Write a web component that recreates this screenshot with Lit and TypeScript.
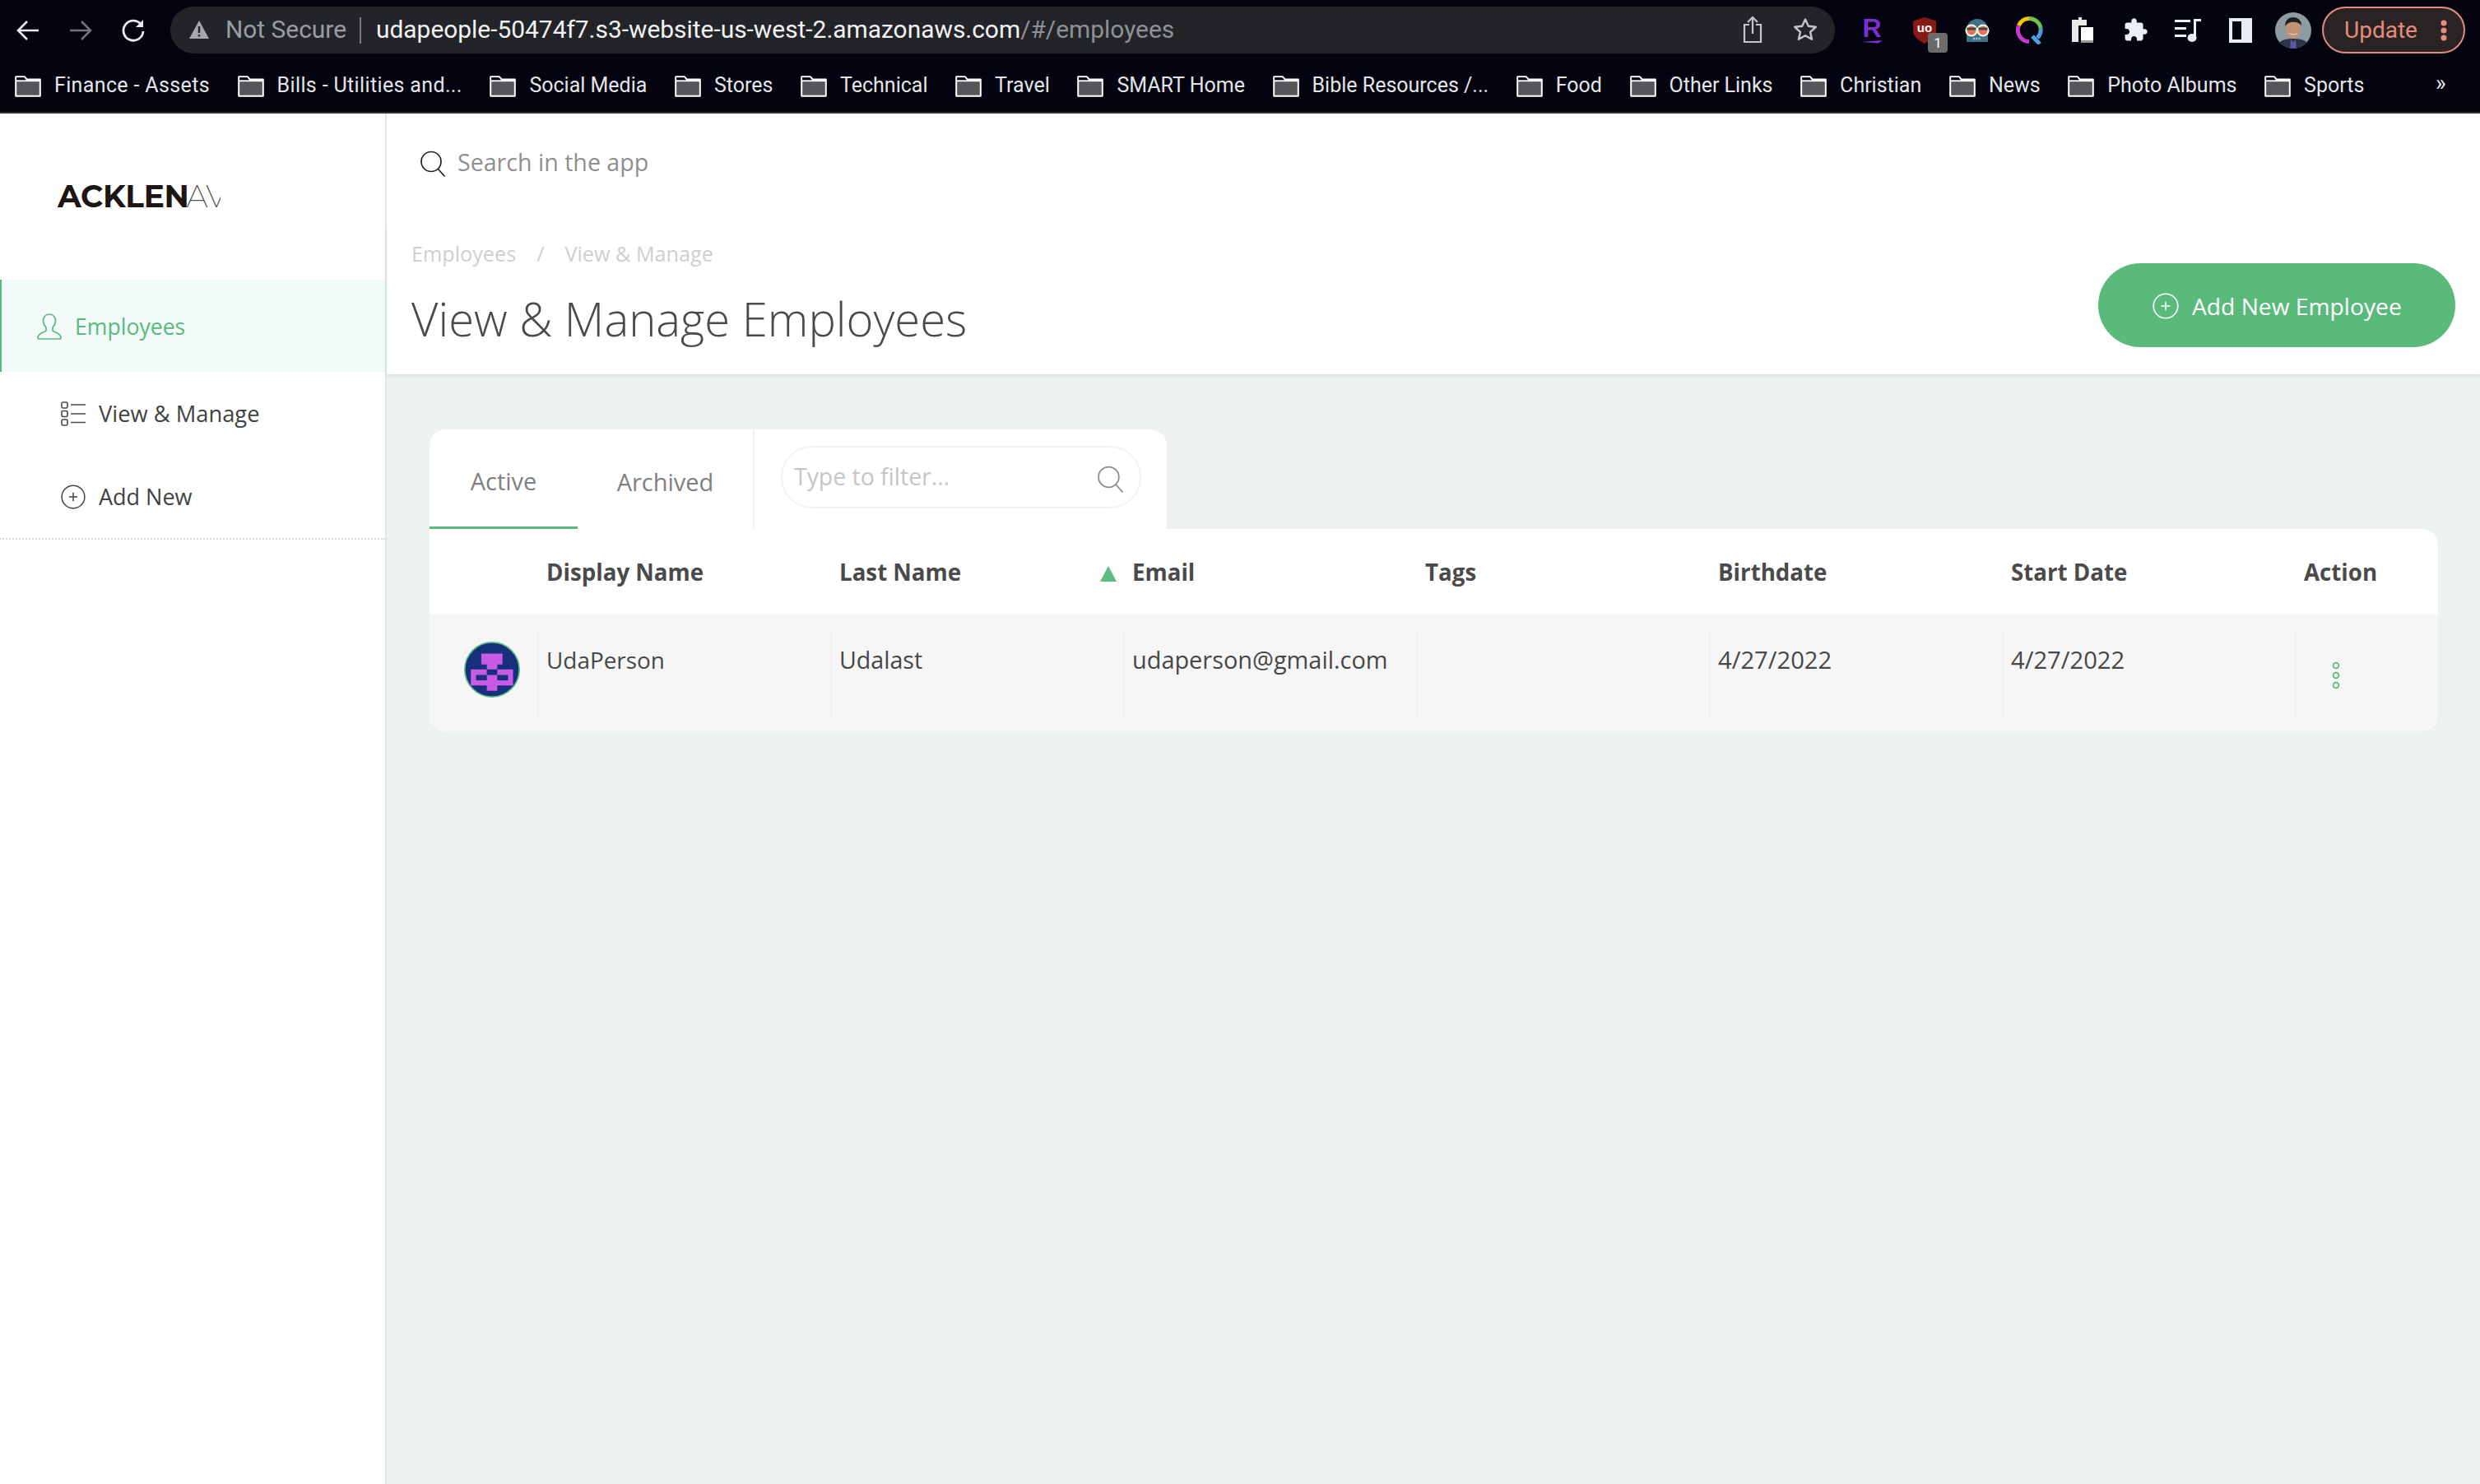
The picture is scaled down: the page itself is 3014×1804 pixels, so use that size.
import { LitElement, html, css } from "lit";
import { customElement } from "lit/decorators.js";

const bookmarks = ["Finance - Assets","Bills - Utilities and...","Social Media","Stores","Technical","Travel","SMART Home","Bible Resources /...","Food","Other Links","Christian","News","Photo Albums","Sports"];
const folder = html`<svg class="folder" width="32" height="26" viewBox="0 0 32 26"><path d="M1.2 24.8V1.2h10.6l3 3.4h16v20.2z" fill="#55565a" stroke="#fff" stroke-width="2" stroke-linejoin="round"/><path d="M1.2 6.2h30" stroke="#fff" stroke-width="2"/><path d="M2.2 2.2h9.2l2.2 3H2.2z" fill="#03040f"/></svg>`;
const plus = (c: string, s: number) => html`<svg width="${s}" height="${s}" viewBox="0 0 32 32" fill="none" stroke="${c}" stroke-width="1.6"><circle cx="16" cy="16" r="14.8"/><path d="M16 10.5v11M10.5 16h11"/></svg>`;
const lens = (c: string, s: number) => html`<svg width="${s}" height="${s}" viewBox="0 0 32 32" fill="none" stroke="${c}" stroke-width="1.7"><circle cx="14" cy="13.5" r="12"/><path d="M22.5 22.5l8 9"/></svg>`;

@customElement("app-root")
export class AppRoot extends LitElement {
  static styles = css`
    :host { display: block; width: 3014px; height: 1804px; overflow: hidden; font-family: "Open Sans", sans-serif; color: #444; background: #edf1f2; }
    .chrome { height: 136px; background: #03040f; border-bottom: 2px solid #2c2e33; font-family: Roboto, sans-serif; }
    .toolbar { height: 72px; display: flex; align-items: flex-start; padding: 8px 18px 0 2px; box-sizing: border-box; }
    .slot { width: 64px; height: 57px; display: flex; align-items: center; justify-content: center; flex: none; position: relative; }
    .omni { width: 2023px; height: 57px; margin: 0 13px 0 13px; border-radius: 29px; background: #232428; display: flex; align-items: center; padding: 0 20px 2px 23px; box-sizing: border-box; flex: none; font-size: 29.9px; white-space: nowrap; }
    .ns { color: #9a9da1; margin: 0 16px 0 20px; }
    .div { width: 2px; height: 32px; background: #77797d; margin: 2px 18px 0 0; }
    .url { color: #f1f2f4; }
    .url span { color: #8f9195; }
    .omni-r { margin-left: auto; display: flex; align-items: center; gap: 37px; margin-right: 1px; }
    .update { width: 174px; height: 57px; margin-left: 3px; box-sizing: border-box; border: 2px solid #e58a7e; border-radius: 29px; background: #2a2324; color: #e88b7f; display: flex; align-items: center; padding-left: 25px; font-size: 28px; flex: none; position: relative; }
    .udots { position: absolute; right: 20px; top: 14px; }
    .me { width: 44px; height: 44px; border-radius: 50%; overflow: hidden; }
    .badge { position: absolute; left: 36px; top: 32px; width: 24px; height: 24px; border-radius: 4px; background: #6b6b6b; color: #fff; font-size: 17px; line-height: 24px; text-align: center; }
    .bars { height: 64px; display: flex; align-items: flex-start; padding: 17px 0 0 18px; box-sizing: border-box; position: relative; gap: 33.6px; color: #e4e5e8; font-size: 25px; }
    .bm { display: flex; align-items: center; gap: 16px; height: 29px; white-space: nowrap; }
    .bm svg { margin-top: 2px; }
    .bm.wide { letter-spacing: 0.36px; }
    .more { position: absolute; left: 2960px; top: 13px; font-size: 27px; color: #e4e5e8; }

    .body { display: flex; height: 1666px; }
    .side { width: 470px; background: #fff; border-right: 2px solid #e3e6e8; box-sizing: border-box; flex: none; }
    .logo-wrap { height: 202px; padding: 82px 0 0 70px; box-sizing: border-box; }
    .logo { width: 198px; height: 40px; overflow: hidden; white-space: nowrap; font-family: Montserrat, Inter, sans-serif; font-size: 37.5px; line-height: 38px; color: #1e1613; font-weight: 700; letter-spacing: -0.3px; }
    .logo span { font-weight: 200; color: #554f4c; letter-spacing: -1px; margin-left: -3px; }
    .nav { display: flex; align-items: center; height: 101px; padding-left: 74px; gap: 16px; font-size: 27.3px; color: #424242; box-sizing: border-box; }
    .nav.on { height: 112px; background: #f3fbfa; border-left: 2px solid #5aba7b; padding: 2px 0 0 43px; color: #5aba7b; gap: 16px; font-size: 26.6px; }
    .nav.add-new { font-size: 27px; }
    .navs { border-bottom: 2px dotted #d6d8da; }

    .main { flex: 1; min-width: 0; }
    .search { height: 137px; background: #fff; display: flex; align-items: center; padding: 0 0 20px 40px; gap: 14px; box-sizing: border-box; color: #8f8f8f; font-size: 28.6px; }
    .search svg { margin-top: 4px; }
    .head { height: 180px; background: #fff; box-shadow: 0 2px 5px rgba(0,0,0,.09); display: flex; justify-content: space-between; padding: 0 30px; box-sizing: border-box; position: relative; }
    .crumbs { display: flex; gap: 25px; color: #cfcfcf; font-size: 25.2px; line-height: 34px; margin-top: 16px; }
    h1 { margin: 24px 0 0; font-weight: 300; font-size: 56.2px; line-height: 76px; color: #4a4a4a; }
    .add { width: 434px; height: 102px; margin-top: 45px; border-radius: 51px; background: #5aba7b; color: #fff; display: flex; align-items: center; padding: 2px 0 0 66px; gap: 16px; box-sizing: border-box; font-size: 28.2px; }

    .content { padding: 67px 0 0 52px; }
    .strip { width: 896px; height: 121px; background: #fff; border-radius: 20px 20px 0 0; display: flex; }
    .tab { display: flex; align-items: center; justify-content: center; font-size: 29px; color: #808080; padding-top: 6px; box-sizing: border-box; }
    .tab.a { width: 180px; border-bottom: 3px solid #5aba7b; }
    .tab.b { width: 215px; border-right: 2px solid #f3f3f3; }
    .filter { flex: 1; padding: 20px 0 0 32px; }
    .input { width: 438px; height: 76px; box-sizing: border-box; border: 2px solid #f2f2f2; border-radius: 38px; display: flex; align-items: center; justify-content: space-between; padding: 0 19px 2px 14px; color: #c6c6c6; font-size: 28.4px; }
    .input svg { margin-top: 6px; }

    .table { width: 2441px; display: grid; grid-template-columns: 131px repeat(6, 356px) 174px; background: #fff; border-radius: 0 20px 20px 20px; overflow: hidden; }
    .th { height: 104px; display: flex; align-items: center; justify-content: space-between; padding: 0 8px 0 11px; box-sizing: border-box; font-weight: 700; font-size: 27.7px; color: #4a4a4a; }
    .tri { width: 0; height: 0; margin-top: 4px; border-left: 10.5px solid transparent; border-right: 10.5px solid transparent; border-bottom: 19px solid #5fbb85; }
    .cell { height: 142px; background: #f6f6f6; position: relative; padding: 19px 0 0; box-sizing: border-box; }
    .inner { height: 108px; border-left: 2px solid #f0f0f0; padding: 18px 0 0 9px; box-sizing: border-box; line-height: 36px; color: #474747; }
    .f0 { font-size: 27.9px; }
    .f1 { font-size: 28.6px; }
    .f2 { font-size: 28.9px; }
    .f4, .f5 { font-size: 29.2px; }
    .cell.first { padding: 33px 0 0 42px; }
    .dots { display: block; margin: 20px 0 0 34px; }
  `;

  render() {
    const cols = ["UdaPerson", "Udalast", "udaperson@gmail.com", "", "4/27/2022", "4/27/2022"];
    return html`
      <div class="chrome">
        <div class="toolbar">
          <div class="slot"><svg width="30" height="30" viewBox="0 0 30 30" fill="none" stroke="#e8eaed" stroke-width="2.6"><path d="M28 15H4M14 4L3 15l11 11"/></svg></div>
          <div class="slot"><svg width="30" height="30" viewBox="0 0 30 30" fill="none" stroke="#74767a" stroke-width="2.6"><path d="M2 15h24M16 4l11 11-11 11"/></svg></div>
          <div class="slot"><svg width="30" height="30" viewBox="0 0 30 30" fill="none" stroke="#e8eaed" stroke-width="2.8"><path d="M25 8.5A12 12 0 1 0 27 16"/><path d="M27 2v9h-9z" fill="#e8eaed" stroke="none"/></svg></div>
          <div class="omni">
            <svg width="24" height="22" viewBox="0 0 24 22"><path d="M12 0L24 22H0z" fill="#a5a7aa"/><path d="M12 7v8M12 17v2.5" stroke="#232428" stroke-width="2.4"/></svg>
            <span class="ns">Not Secure</span><i class="div"></i>
            <span class="url">udapeople-50474f7.s3-website-us-west-2.amazonaws.com<span>/#/employees</span></span>
            <div class="omni-r">
              <svg width="24" height="34" viewBox="0 0 24 34" fill="none" stroke="#c4c6c9" stroke-width="2.2"><path d="M8 11H2v21h20V11h-6M12 22V2M6 8l6-6 6 6"/></svg>
              <svg width="30" height="30" viewBox="0 0 30 30" fill="none" stroke="#c4c6c9" stroke-width="2.4"><path d="M15 2.5l3.8 8.3 9 1-6.7 6.1 1.9 8.9-8-4.6-8 4.6 1.9-8.9L2.2 11.8l9-1z" stroke-linejoin="round"/></svg>
            </div>
          </div>
          <div class="slot"><svg width="30" height="32" viewBox="0 0 30 32"><text x="15" y="24" text-anchor="middle" font-family="Liberation Sans" font-weight="700" font-size="32" fill="#7b2fd0">R</text><path d="M2 30l26-2-5 3.5z" fill="#7b2fd0"/></svg></div>
          <div class="slot"><svg width="28" height="32" viewBox="0 0 28 32"><path d="M14 0l14 4.5v12c0 7-7 12-14 15.500C7 28.500 0 23.500 0 16.500v-12z" fill="#861a14"/><text x="14" y="18" text-anchor="middle" font-family="Liberation Sans" font-weight="700" font-size="15" fill="#fff">uo</text></svg><span class="badge">1</span></div>
          <div class="slot"><svg width="30" height="30" viewBox="0 0 30 30"><path d="M2 29V14a13 13 0 0 1 26 0v15z" fill="#3d7384"/><path d="M10 25h10" stroke="#a9c6cf" stroke-width="2.5" stroke-dasharray="2 1.3"/><circle cx="8" cy="15" r="6.5" fill="#e8744f" stroke="#f7f1ea" stroke-width="2.2"/><circle cx="22" cy="15" r="6.5" fill="#e8744f" stroke="#f7f1ea" stroke-width="2.2"/><path d="M2.5 13h11M16.5 13h11" stroke="#3a4a50" stroke-width="3"/></svg></div>
          <div class="slot"><svg width="34" height="34" viewBox="0 0 34 34" fill="none" stroke-width="5"><path d="M16 30.5A14 14 0 0 1 3.5 11" stroke="#c03bc7"/><path d="M3.5 11A14 14 0 0 1 16 2.5" stroke="#f5c400"/><path d="M16 2.5A14 14 0 0 1 30 14" stroke="#6cc24a"/><path d="M30 14A14 14 0 0 1 26 26" stroke="#4e9be0"/><path d="M20 24l9 9.5" stroke="#4e9be0"/></svg></div>
          <div class="slot"><svg width="28" height="32" viewBox="0 0 28 32"><path d="M9 0h4v3h6v7H9v20H1V3h8z" fill="#e8e8e8"/><rect x="12" y="12" width="15" height="18" fill="#fff"/><rect x="12" y="28" width="15" height="3" fill="#999"/></svg></div>
          <div class="slot"><svg width="31" height="31" viewBox="0 0 24 24"><path d="M20.5 11H19V7c0-1.1-.9-2-2-2h-4V3.5C13 2.12 11.88 1 10.5 1S8 2.12 8 3.5V5H4c-1.1 0-1.99.9-1.99 2v3.8H3.5c1.49 0 2.7 1.21 2.7 2.7s-1.21 2.7-2.7 2.7H2V20c0 1.1.9 2 2 2h3.8v-1.5c0-1.49 1.21-2.7 2.7-2.7 1.49 0 2.7 1.21 2.7 2.7V22H17c1.1 0 2-.9 2-2v-4h1.5c1.38 0 2.5-1.12 2.5-2.5S21.88 11 20.5 11z" fill="#eef0f7"/></svg></div>
          <div class="slot"><svg width="32" height="30" viewBox="0 0 32 30" fill="#eef0f7"><rect x="0" y="2" width="19" height="3"/><rect x="0" y="11" width="14" height="3"/><rect x="0" y="20" width="14" height="3"/><rect x="23" y="1" width="3" height="23"/><rect x="23" y="1" width="9" height="3"/><ellipse cx="21" cy="24" rx="5.5" ry="5"/></svg></div>
          <div class="slot"><svg width="28" height="30" viewBox="0 0 28 30"><rect width="28" height="30" fill="#e9ecf6"/><rect x="4" y="4" width="11" height="22" fill="#03040f"/></svg></div>
          <div class="slot"><div class="me"><svg width="44" height="44" viewBox="0 0 44 44"><rect width="44" height="44" fill="#8d9ba3"/><path d="M2 44c1-10 10-12 20-12s19 2 20 12z" fill="#2e3245"/><path d="M19 33l3 3 3-3 1 11h-8z" fill="#5a58a8"/><ellipse cx="22" cy="20" rx="9" ry="12" fill="#c09274"/><path d="M12 17c0-8 5-11 10-11s10 3 10 10c-3-4-8-5-13-4-3 1-5 2-7 5z" fill="#20201f"/><path d="M17 25c3 2 7 2 10 0-1 3-9 3-10 0z" fill="#fff"/></svg></div></div>
          <div class="update">Update<svg class="udots" width="8" height="26" viewBox="0 0 8 26" fill="#e88b7f"><circle cx="4" cy="4" r="3.5"/><circle cx="4" cy="13" r="3.5"/><circle cx="4" cy="22" r="3.5"/></svg></div>
        </div>
        <div class="bars">
          ${bookmarks.map((b, i) => html`<div class="bm ${i < 2 ? "wide" : ""}">${folder}<span>${b}</span></div>`)}
          <span class="more">»</span>
        </div>
      </div>
      <div class="body">
        <aside class="side">
          <div class="logo-wrap"><div class="logo">ACKLEN<span>AVENUE</span></div></div>
          <div class="navs">
            <div class="nav on">
              <svg width="30" height="32" viewBox="0 0 30 32" fill="none" stroke="#5aba7b" stroke-width="1.7"><path d="M15 1c-5 0-7.500 4-7.500 8 0 3.500 1.500 6 3.500 8v4c-2 2-9 3-10 8 0 1 .5 2 2 2h24c1.500 0 2-1 2-2-1-5-8-6-10-8v-4c2-2 3.500-4.500 3.500-8 0-4-2.500-8-7.500-8z" stroke-linejoin="round"/></svg>
              <span>Employees</span>
            </div>
            <div class="nav">
              <svg width="30" height="30" viewBox="0 0 30 30" fill="none" stroke="#4a4a4a" stroke-width="1.6"><rect x="1" y="1" width="7" height="7" rx="1.5"/><rect x="1" y="11.5" width="7" height="7" rx="1.5"/><rect x="1" y="22" width="7" height="7" rx="1.5"/><path d="M12 4h18M12 15h18M12 25.5h18"/></svg>
              <span>View &amp; Manage</span>
            </div>
            <div class="nav add-new">${plus("#444", 30)}<span>Add New</span></div>
          </div>
        </aside>
        <main class="main">
          <div class="search">${lens("#222", 32)}<span>Search in the app</span></div>
          <div class="head">
            <div>
              <div class="crumbs"><span>Employees</span><span>/</span><span>View &amp; Manage</span></div>
              <h1>View &amp; Manage Employees</h1>
            </div>
            <div class="add">${plus("#fff", 32)}<span>Add New Employee</span></div>
          </div>
          <div class="content">
            <div class="strip">
              <div class="tab a">Active</div>
              <div class="tab b">Archived</div>
              <div class="filter"><div class="input"><span>Type to filter...</span>${lens("#8b8b8b", 33)}</div></div>
            </div>
            <div class="table">
              <div class="th"></div>
              <div class="th">Display Name</div>
              <div class="th">Last Name<i class="tri"></i></div>
              <div class="th">Email</div>
              <div class="th">Tags</div>
              <div class="th">Birthdate</div>
              <div class="th">Start Date</div>
              <div class="th">Action</div>
              <div class="cell first">
                <svg width="68" height="68" viewBox="73 57 202 203">
                  <circle cx="174" cy="158.5" r="99" fill="#17307c" stroke="#5dbb84" stroke-width="5"/>
                  <path fill="#c85be6" fill-rule="evenodd" d="M135 100h77v40h-19v18h57v58h-57v19h-38v-19H97v-58h58v-18h-20zM155 158v20h38v-20zM116 178v19h39v-19zM193 178v19h39v-19z"/>
                </svg>
              </div>
              ${cols.map((c, i) => html`<div class="cell"><div class="inner f${i}">${c}</div></div>`)}
              <div class="cell"><div class="inner"><svg class="dots" width="10" height="34" viewBox="0 0 10 34" fill="none" stroke="#5aba7b" stroke-width="1.8"><circle cx="5" cy="5" r="3.4"/><circle cx="5" cy="17" r="3.4"/><circle cx="5" cy="29" r="3.4"/></svg></div></div>
            </div>
          </div>
        </main>
      </div>
    `;
  }
}
